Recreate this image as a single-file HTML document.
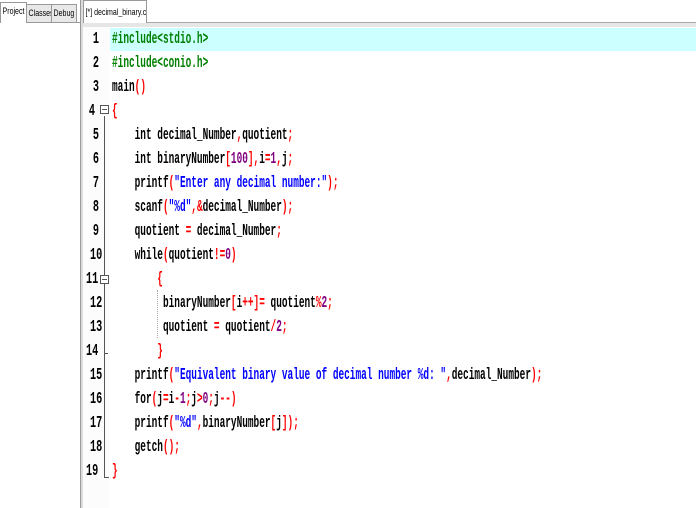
<!DOCTYPE html>
<html><head><style>
body{margin:0;width:696px;height:508px;background:#fff;overflow:hidden;position:relative;font-family:"Liberation Sans",sans-serif}
.tab{position:absolute;top:4px;height:17px;font-size:9px;line-height:17px;white-space:nowrap;overflow:hidden;border:1px solid #999;border-bottom:none;background:#e8e8e8;color:#000}
.tab span{display:inline-block;transform:scaleX(0.78);transform-origin:left;padding-left:2px}
.ln{position:absolute;left:84px;width:15px;text-align:right;font:bold 17px "Liberation Mono",monospace;transform:scaleX(0.6);transform-origin:right;height:24px;line-height:24px}
.cl{position:absolute;left:112px;white-space:pre;font:bold 17px "Liberation Mono",monospace;transform:scaleX(0.555);transform-origin:left;height:24px;line-height:24px;color:#000}
.p{color:#008000}
.r{color:#ff0000}
.s{color:#0000ff}
.n{color:#800080}
</style></head><body>
<div style="position:absolute;left:0;top:0;width:80px;height:508px;background:#fff;border-right:1px solid #999"></div>
<div style="position:absolute;left:0;top:22px;width:80px;height:1px;background:#999"></div>
<div class="tab" style="left:0;width:25px;top:2px;height:20px;background:#fff"><span>Project</span></div>
<div class="tab" style="left:26px;width:24px"><span>Classes</span></div>
<div class="tab" style="left:51px;width:24px"><span>Debug</span></div>
<div style="position:absolute;left:81px;top:0;width:2px;height:508px;background:#ddd"></div>
<div style="position:absolute;left:83px;top:22px;width:613px;height:4px;background:#e6e6e6;border-top:1px solid #aaa"></div>
<div class="tab" style="left:83px;width:62px;top:0;height:22px;line-height:22px;background:#fff"><span>[*] decimal_binary.c</span></div>
<div style="position:absolute;left:83px;top:27px;width:27px;height:481px;background:#fcfcfc"></div>
<div style="position:absolute;left:110px;top:28px;width:586px;height:23px;background:#ccffff"></div>
<div style="position:absolute;left:104px;top:116px;width:1px;height:362px;background:#555"></div>
<div style="position:absolute;left:104px;top:477px;width:5px;height:1px;background:#555"></div>
<div style="position:absolute;left:104px;top:353px;width:4px;height:1px;background:#555"></div>
<div style="position:absolute;left:100px;top:105px;width:7px;height:7px;border:1px solid #555;background:#fff;font-size:0"><div style="margin:3px 1px;height:1px;background:#555"></div></div>
<div style="position:absolute;left:100px;top:275px;width:7px;height:7px;border:1px solid #555;background:#fff;font-size:0"><div style="margin:3px 1px;height:1px;background:#555"></div></div>
<div style="position:absolute;left:157px;top:290px;width:1px;height:48px;border-left:1px dotted #aaa"></div>

<div class="ln" style="top:28px">1</div><div class="cl" style="top:28px"><span class="p">#include&lt;stdio.h&gt;</span></div>
<div class="ln" style="top:52px">2</div><div class="cl" style="top:52px"><span class="p">#include&lt;conio.h&gt;</span></div>
<div class="ln" style="top:76px">3</div><div class="cl" style="top:76px">main<span class="r">()</span></div>
<div class="ln" style="top:100px;left:80px">4</div><div class="cl" style="top:100px"><span class="r">{</span></div>
<div class="ln" style="top:124px">5</div><div class="cl" style="top:124px">    int decimal_Number<span class="r">,</span>quotient<span class="r">;</span></div>
<div class="ln" style="top:148px">6</div><div class="cl" style="top:148px">    int binaryNumber<span class="r">[</span><span class="n">100</span><span class="r">],</span>i<span class="r">=</span><span class="n">1</span><span class="r">,</span>j<span class="r">;</span></div>
<div class="ln" style="top:172px">7</div><div class="cl" style="top:172px">    printf<span class="r">(</span><span class="s">"Enter any decimal number:"</span><span class="r">);</span></div>
<div class="ln" style="top:196px">8</div><div class="cl" style="top:196px">    scanf<span class="r">(</span><span class="s">"%d"</span><span class="r">,&amp;</span>decimal_Number<span class="r">);</span></div>
<div class="ln" style="top:220px">9</div><div class="cl" style="top:220px">    quotient <span class="r">=</span> decimal_Number<span class="r">;</span></div>
<div class="ln" style="top:244px">10</div><div class="cl" style="top:244px">    while<span class="r">(</span>quotient<span class="r">!=</span><span class="n">0</span><span class="r">)</span></div>
<div class="ln" style="top:268px;left:80px">11</div><div class="cl" style="top:268px">        <span class="r">{</span></div>
<div class="ln" style="top:292px">12</div><div class="cl" style="top:292px">         binaryNumber<span class="r">[</span>i<span class="r">++]=</span> quotient<span class="r">%</span><span class="n">2</span><span class="r">;</span></div>
<div class="ln" style="top:316px">13</div><div class="cl" style="top:316px">         quotient <span class="r">=</span> quotient<span class="r">/</span><span class="n">2</span><span class="r">;</span></div>
<div class="ln" style="top:340px;left:80px">14</div><div class="cl" style="top:340px">        <span class="r">}</span></div>
<div class="ln" style="top:364px">15</div><div class="cl" style="top:364px">    printf<span class="r">(</span><span class="s">"Equivalent binary value of decimal number %d: "</span><span class="r">,</span>decimal_Number<span class="r">);</span></div>
<div class="ln" style="top:388px">16</div><div class="cl" style="top:388px">    for<span class="r">(</span>j<span class="r">=</span>i<span class="r">-</span><span class="n">1</span><span class="r">;</span>j<span class="r">&gt;</span><span class="n">0</span><span class="r">;</span>j<span class="r">--)</span></div>
<div class="ln" style="top:412px">17</div><div class="cl" style="top:412px">    printf<span class="r">(</span><span class="s">"%d"</span><span class="r">,</span>binaryNumber<span class="r">[</span>j<span class="r">]);</span></div>
<div class="ln" style="top:436px">18</div><div class="cl" style="top:436px">    getch<span class="r">();</span></div>
<div class="ln" style="top:460px;left:80px">19</div><div class="cl" style="top:460px"><span class="r">}</span></div>
</body></html>
